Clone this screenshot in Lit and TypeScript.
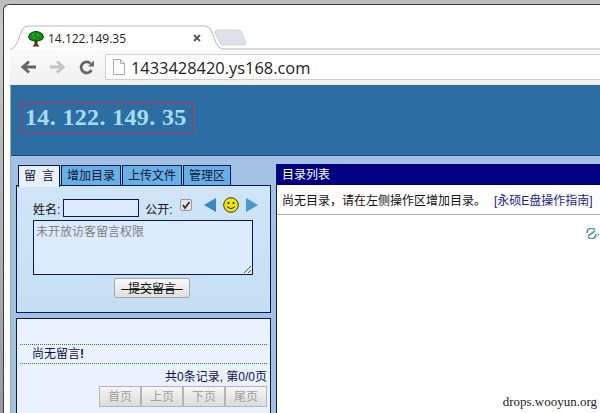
import { LitElement, html, css } from "lit";
import { customElement } from "lit/decorators.js";

@customElement("app-root")
export class AppRoot extends LitElement {
  static styles = css`
    :host {
      display: block;
      width: 600px;
      height: 413px;
      overflow: hidden;
      background: linear-gradient(#bdbdbd, #c8c8c8 30px, #9a9a9a);
      font-family: "Liberation Sans", "Noto Sans CJK SC", sans-serif;
    }
    .window {
      margin: 4px 0 0 3px;
      height: 409px;
      box-sizing: border-box;
      border-top: 1px solid #3a3a3a;
      border-left: 1px solid #3a3a3a;
      border-top-left-radius: 6px;
      background: #fff;
      padding-left: 6px;
      display: flex;
      flex-direction: column;
    }
    .strip {
      position: relative;
      height: 45px;
      flex: none;
    }
    .strip-bg {
      position: absolute;
      left: 0;
      top: 0;
    }
    .tab {
      position: absolute;
      left: 18px;
      top: 25px;
      display: flex;
      align-items: center;
      gap: 4px;
      font: 12px "Open Sans", sans-serif;
      color: #222;
    }
    .close {
      position: absolute;
      left: 183px;
      top: 29px;
    }
    .toolbar {
      flex: none;
      height: 35px;
      box-sizing: border-box;
      padding: 4px 0 5px 11px;
      display: flex;
      align-items: center;
      background: linear-gradient(#fafafa, #f0f0f0);
    }
    .nav {
      display: flex;
      gap: 14px;
      margin-right: 11px;
    }
    .url {
      flex: 1;
      height: 26px;
      box-sizing: border-box;
      border: 1px solid #d0d0d0;
      border-right: none;
      border-radius: 2px 0 0 2px;
      background: #fff;
      display: flex;
      align-items: center;
      gap: 6px;
      padding-left: 7px;
      font: 16.4px "Open Sans", sans-serif;
      color: #222;
    }
    .page {
      flex: 1;
      min-height: 0;
      border-left: 1px solid #a8a8a8;
      display: flex;
      flex-direction: column;
      background: #a3c1e5;
    }
    .header {
      flex: none;
      height: 71px;
      box-sizing: border-box;
      padding: 17px 0 0 9px;
      background: #2c6da4;
      border-bottom: 1px solid #1c4f80;
      display: flex;
      align-items: flex-start;
    }
    .site {
      box-sizing: border-box;
      width: 173px;
      height: 31px;
      border: 1px solid #b8324a;
      padding-left: 4px;
      font: bold 24px/28px "Liberation Serif", serif;
      letter-spacing: 0.35px;
      color: #a9dcf7;
      white-space: pre;
    }
    .body {
      flex: 1;
      min-height: 0;
      display: flex;
      gap: 5px;
      padding-left: 5px;
    }
    .side {
      width: 255px;
      flex: none;
      display: flex;
      flex-direction: column;
      padding-top: 9px;
    }
    .tabs {
      display: flex;
      height: 20px;
      padding-left: 2px;
      gap: 1px;
      position: relative;
      z-index: 1;
    }
    .ptab {
      box-sizing: border-box;
      height: 20px;
      padding: 0 5px;
      border: 1px solid #0a1a50;
      border-bottom: none;
      background: #66b0e8;
      font-size: 12px;
      line-height: 20px;
      color: #101030;
      white-space: nowrap;
    }
    .ptab.on {
      height: 22px;
      background: #e6f1fb;
      word-spacing: 2.7px;
    }
    .form {
      box-sizing: border-box;
      height: 128px;
      border: 1px solid #0a1a50;
      background: linear-gradient(#d0e5f8, #c6def3);
      padding: 13px 0 0 16px;
      font-size: 12px;
      color: #111;
    }
    .row {
      display: flex;
      align-items: center;
      height: 18px;
      white-space: nowrap;
    }
    .name {
      box-sizing: border-box;
      width: 76px;
      height: 18px;
      margin: 0 6px 0 3px;
      border: 1px solid #0a1a50;
      background: #dcecfe;
    }
    .check {
      margin: 0 12px 6px 7px;
      display: block;
    }
    .emo {
      display: block;
      margin: 0 7px 6px 0;
    }
    .area {
      position: relative;
      box-sizing: border-box;
      width: 220px;
      height: 55px;
      margin-top: 3px;
      border: 1px solid #0a1a50;
      background: #dcecfe;
      padding: 1px 2px;
      font-size: 12px;
      color: #808080;
    }
    .grip {
      position: absolute;
      right: 0;
      bottom: 0;
    }
    .submit {
      width: 76px;
      height: 20px;
      box-sizing: border-box;
      margin: 3px 0 0 81px;
      border: 1px solid #a8a8a8;
      border-radius: 2px;
      background: linear-gradient(#fbfbfb, #dedede);
      text-align: center;
      font-size: 12px;
      line-height: 20px;
      color: #111;
      white-space: pre;
      text-decoration: line-through;
    }
    .list {
      box-sizing: border-box;
      flex: 1;
      margin-top: 5px;
      border: 1px solid #0a1a50;
      border-bottom: none;
      background: #e9f2fe;
      padding: 25px 3px 0 3px;
      color: #10104a;
      font-size: 12px;
    }
    .msg {
      border-top: 1px dotted #2e7d32;
      border-bottom: 1px dotted #2e7d32;
      height: 18px;
      line-height: 18px;
      padding-left: 12px;
    }
    .count {
      text-align: right;
      line-height: 14px;
      margin-top: 6px;
    }
    .pager {
      display: flex;
      justify-content: flex-end;
      margin-top: 2px;
    }
    .pager span {
      box-sizing: border-box;
      width: 42px;
      height: 21px;
      border: 1px solid #b4b4b4;
      background: linear-gradient(#f6f6f6, #dcdcdc);
      text-align: center;
      font-size: 12px;
      line-height: 20px;
      color: #a0a0a0;
    }
    .main {
      flex: 1;
      min-width: 0;
      margin-top: 8px;
      background: #fff;
      border-left: 1px solid #0a1a50;
      position: relative;
    }
    .main-title {
      height: 21px;
      background: #000080;
      color: #fff;
      font-size: 12px;
      line-height: 23px;
      padding-left: 5px;
    }
    .notice {
      height: 30px;
      box-sizing: border-box;
      border-bottom: 1px solid #9db4b4;
      padding-left: 5px;
      font-size: 12px;
      line-height: 32px;
      white-space: nowrap;
      color: #111;
    }
    .notice a {
      color: #1a1a9a;
      margin-left: 8px;
    }
    .spin {
      position: absolute;
      left: 308px;
      top: 64px;
    }
    .mark {
      position: absolute;
      right: 3px;
      bottom: 3px;
      font: 13px "Liberation Serif", serif;
      color: #222;
    }
  `;

  render() {
    return html`
      <div class="window">
        <div class="strip">
          <svg class="strip-bg" width="590" height="45" viewBox="0 0 590 45">
            <path d="M0 45 Q5 43 7 38 L12 25 Q14 21 18 21 L195 21 Q199 21 201 25 L206 38 Q208 43 212 44 L590 44" fill="#fff" stroke="#b8b8b8" />
            <path d="M206 25 L228 25 Q231 25 232 28 L236 38 Q236 40 234 40 L213 40 Q211 40 210 38 L205 28 Z" fill="#dde2ea" stroke="#cfd5de" />
          </svg>
          <div class="tab">
            <svg width="16" height="16" viewBox="0 0 16 16">
              <path d="M6.500 8 L9.500 8 L9.500 13 L11.500 15.500 L4.500 15.500 L6.500 13 Z" fill="#5a3410" />
              <path d="M0.500 6 Q1 2 5 1 Q8 0 11 1 Q15 2 15.500 6 Q15 9.500 11 9.500 Q8 11 5 9.500 Q1 9.500 0.500 6 Z" fill="#0f8f0f" stroke="#0a400a" stroke-width="1" />
              <path d="M4 4 L6 3 M9 3 L11 5 M5 7 L7 6" stroke="#4ec84e" stroke-width="1" />
            </svg>
            <span>14.122.149.35</span>
          </div>
          <svg class="close" width="8" height="8" viewBox="0 0 8 8">
            <path d="M1 1 L7 7 M7 1 L1 7" stroke="#555" stroke-width="1.800" />
          </svg>
        </div>
        <div class="toolbar">
          <div class="nav">
            <svg width="15" height="14" viewBox="0 0 15 14">
              <path d="M15 7 L3 7 M8 1.500 L2 7 L8 12.500" fill="none" stroke="#666" stroke-width="3" />
            </svg>
            <svg width="15" height="14" viewBox="0 0 15 14">
              <path d="M0 7 L12 7 M7 1.500 L13 7 L7 12.500" fill="none" stroke="#c4c4c4" stroke-width="3" />
            </svg>
            <svg width="15" height="15" viewBox="0 0 15 15">
              <path d="M12.500 10 A5.500 5.500 0 1 1 11.500 3.500" fill="none" stroke="#666" stroke-width="2.800" />
              <path d="M9 6.500 L15 6.500 L15 0.500 Z" fill="#666" />
            </svg>
          </div>
          <div class="url">
            <svg width="12" height="16" viewBox="0 0 12 16">
              <path d="M0.500 0.500 L7.500 0.500 L11.500 4.500 L11.500 15.500 L0.500 15.500 Z M7.500 0.500 L7.500 4.500 L11.500 4.500" fill="#fff" stroke="#aaa" />
            </svg>
            <span>1433428420.ys168.com</span>
          </div>
        </div>
        <div class="page">
          <div class="header"><div class="site">14. 122. 149. 35</div></div>
          <div class="body">
            <div class="side">
              <div class="tabs">
                <div class="ptab on">留 言</div>
                <div class="ptab">增加目录</div>
                <div class="ptab">上传文件</div>
                <div class="ptab">管理区</div>
              </div>
              <div class="form">
                <div class="row">
                  <span>姓名:</span>
                  <div class="name"></div>
                  <span>公开:</span>
                  <svg class="check" width="12" height="12" viewBox="0 0 12 12">
                    <rect x="0.500" y="0.500" width="11" height="11" rx="1.500" fill="#e4e4e4" stroke="#9a9a9a" />
                    <path d="M3 6 L5 9 L9.500 3" fill="none" stroke="#333" stroke-width="1.800" />
                  </svg>
                  <svg class="emo" width="12" height="14" viewBox="0 0 12 14">
                    <path d="M0 7 L12 0 L12 14 Z" fill="#3a86c0" />
                  </svg>
                  <svg class="emo" width="16" height="16" viewBox="0 0 16 16">
                    <circle cx="8" cy="8" r="7.300" fill="#f5e800" stroke="#333" />
                    <circle cx="5.500" cy="6" r="1" fill="#111" />
                    <circle cx="10.500" cy="6" r="1" fill="#111" />
                    <path d="M4 9.500 Q8 13.500 12 9.500" fill="none" stroke="#111" />
                  </svg>
                  <svg class="emo" width="12" height="14" viewBox="0 0 12 14">
                    <path d="M12 7 L0 0 L0 14 Z" fill="#4a9ad0" />
                  </svg>
                </div>
                <div class="area">
                  未开放访客留言权限
                  <svg class="grip" width="9" height="9" viewBox="0 0 9 9">
                    <path d="M1 8 L8 1 M5 8 L8 5" stroke="#555" />
                  </svg>
                </div>
                <div class="submit">  提交留言  </div>
              </div>
              <div class="list">
                <div class="msg">尚无留言<b>!</b></div>
                <div class="count">共0条记录, 第0/0页</div>
                <div class="pager">
                  <span>首页</span><span>上页</span><span>下页</span><span>尾页</span>
                </div>
              </div>
            </div>
            <div class="main">
              <div class="main-title">目录列表</div>
              <div class="notice">尚无目录，请在左侧操作区增加目录。<a>[永硕E盘操作指南]</a></div>
              <svg class="spin" width="15" height="11" viewBox="0 0 15 11">
                <path d="M2 5 A4.500 4.500 0 0 1 10 2 M11 6 A4.500 4.500 0 0 1 3 9 M3 8 L10 3" fill="none" stroke="#5a96b0" stroke-width="1.600" />
                <rect x="13" y="6" width="1" height="1" fill="#555" />
              </svg>
              <span class="mark">drops.wooyun.org</span>
            </div>
          </div>
        </div>
      </div>
    `;
  }
}
